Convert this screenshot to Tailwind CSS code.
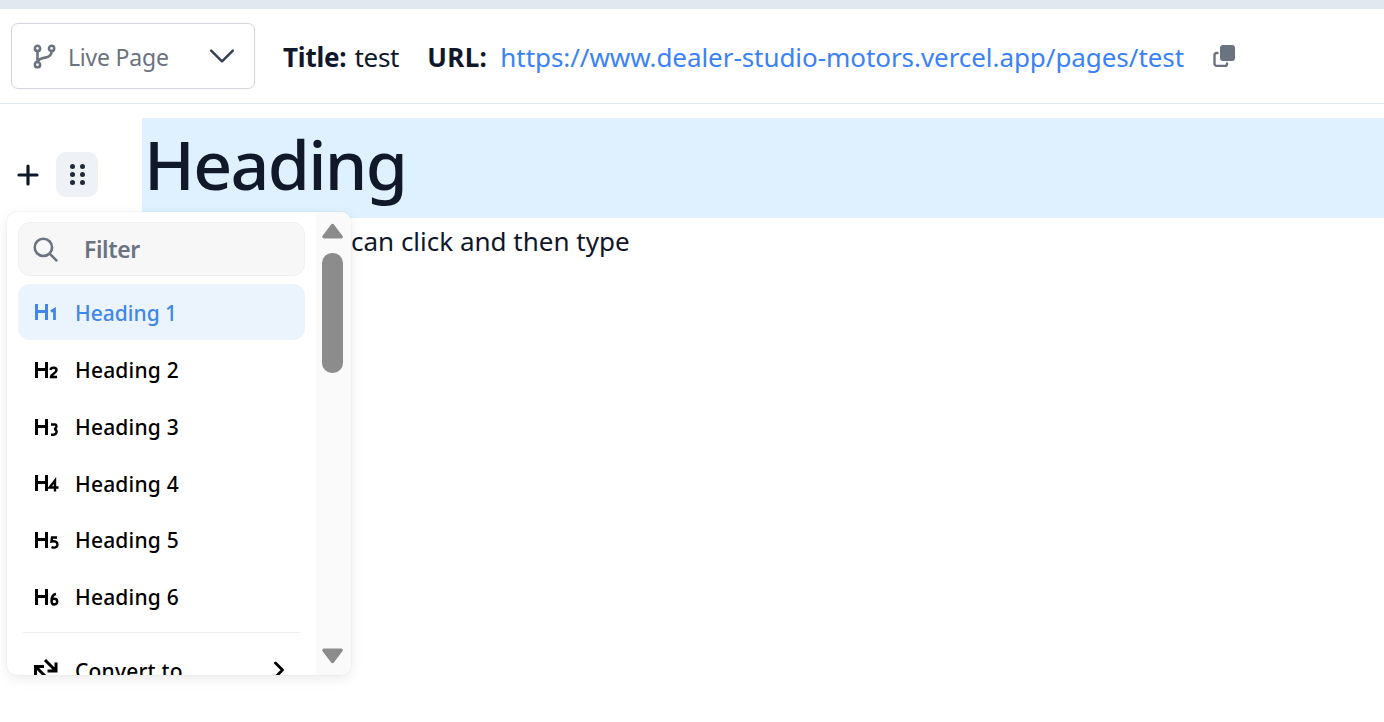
<!DOCTYPE html>
<html>
<head>
<meta charset="utf-8">
<script src="https://cdn.jsdelivr.net/npm/@tailwindcss/browser@4"></script>
</head>
<body class="bg-white font-['Noto_Sans','Open_Sans',sans-serif] text-[#0f172a]">
<div class="relative w-[1384px] h-[722px] overflow-hidden">
  <div class="h-[9px] bg-[#e2e8f0]"></div>
  <header class="h-[95px] border-b border-[#e2e8f0] flex items-center pl-[11px] pb-[1px]">
    <div class="w-[244px] h-[66px] border border-[#d1d5db] rounded-[7px] flex items-center pl-[19px] pr-[19px]">
      <svg class="w-[26px] h-[26px] text-[#6b7280]" viewBox="0 0 24 24" fill="none" stroke="currentColor" stroke-width="2.4" stroke-linecap="round"><circle cx="6" cy="5" r="2.4"/><circle cx="6" cy="20" r="2.4"/><circle cx="19" cy="5" r="2.4"/><path d="M6 7.5v10M19 7.5c0 4-3 5.500-6 6-3 .5-6 1-7 4"/></svg>
      <span class="ml-[11px] mt-[3px] text-[23px] text-[#6b7280] tracking-[-0.2px]">Live Page</span>
      <svg class="ml-auto w-[26px] h-[26px] text-[#374151]" viewBox="0 0 24 24" fill="none" stroke="currentColor" stroke-width="2.3" stroke-linecap="round" stroke-linejoin="round"><path d="M2 7l10 10L22 7"/></svg>
    </div>
    <div class="ml-[28px] text-[26px] flex items-center whitespace-nowrap">
      <b class="mt-[3px] font-bold tracking-[-0.2px]">Title:</b><span class="mt-[3px] ml-[8px] tracking-[-0.3px]">test</span>
      <b class="mt-[3px] ml-[28px] font-bold tracking-[0.4px]">URL:</b>
      <span class="mt-[3px] ml-[13px] text-[#3b82f6] tracking-[-0.06px]">https://www.dealer-studio-motors.vercel.app/pages/test</span>
      <svg class="ml-[29px] w-[22px] h-[22px] text-[#6b7280]" viewBox="0 0 22 22" fill="none"><rect x="7" y="0" width="15" height="16" rx="3" fill="currentColor"/><path d="M4.500 8H3.500A2 2 0 0 0 1.500 10v8.500a2.500 2.500 0 0 0 2.500 2.500h8a2 2 0 0 0 2-2v-.5" stroke="currentColor" stroke-width="2.400" stroke-linecap="round"/></svg>
    </div>
  </header>
  <main class="pt-[14px]">
    <div class="ml-[142px] h-[100px] bg-[#dff1ff] flex items-center pl-[2px] pb-[9px]">
      <h1 class="text-[68px] leading-none font-medium tracking-[-1.7px] text-[#111827]">Heading</h1>
    </div>
    <p class="pl-[351px] mt-[5px] text-[26px] leading-[36px]">can click and then type</p>
  </main>

  <div class="absolute left-[17px] top-[152px] flex items-center gap-[17px]">
    <svg class="w-[22px] h-[22px] text-[#0f172a]" viewBox="0 0 22 22" fill="none" stroke="currentColor" stroke-width="3.200" stroke-linecap="round"><path d="M11 2v18M2 11h18"/></svg>
    <div class="w-[42px] h-[45px] rounded-[10px] bg-[#eef2f6] grid grid-cols-[5px_5px] place-content-center gap-x-[5px] gap-y-[3px]">
      <i class="w-[5px] h-[5px] rounded-full bg-[#1f2937]"></i><i class="w-[5px] h-[5px] rounded-full bg-[#1f2937]"></i>
      <i class="w-[5px] h-[5px] rounded-full bg-[#1f2937]"></i><i class="w-[5px] h-[5px] rounded-full bg-[#1f2937]"></i>
      <i class="w-[5px] h-[5px] rounded-full bg-[#1f2937]"></i><i class="w-[5px] h-[5px] rounded-full bg-[#1f2937]"></i>
    </div>
  </div>

  <div class="absolute left-[7px] top-[212px] w-[344px] h-[463px] bg-white rounded-[10px] shadow-[0_4px_14px_rgba(0,0,0,0.08),0_0_2px_rgba(0,0,0,0.08)] overflow-hidden flex">
    <div class="w-[309px] pl-[11px] pr-[11px] pt-[10px]">
      <div class="h-[54px] bg-[#f7f7f7] border border-[#f0f0f0] rounded-[12px] flex items-center pl-[13px]">
        <svg class="w-[26px] h-[26px] text-[#6b7280]" viewBox="0 0 24 24" fill="none" stroke="currentColor" stroke-width="2.400" stroke-linecap="round"><circle cx="10.500" cy="10.500" r="8"/><path d="M16.500 16.500l6 6"/></svg>
        <span class="ml-[26px] text-[23px] font-semibold text-[#6b7280] tracking-[-0.4px]">Filter</span>
      </div>
      <div class="mt-[8px] h-[56px] rounded-[12px] bg-[#ebf3fc] flex items-center pl-[16px] text-[#3f87ea]">
        <svg class="w-[25px] h-[20px]" viewBox="0 0 25 20" fill="none" stroke="currentColor"><path d="M2.500 2v16M12.500 2v16M2.500 9.500h10" stroke-width="3"/><path d="M17 9.500l3.500-2V18" stroke-width="2.800"/></svg>
        <span class="ml-[16px] mt-[3px] text-[21px] font-medium">Heading 1</span>
      </div>
      <div class="flex flex-col mt-[1px]">
        <div class="h-[57px] flex items-center pl-[16px] text-black">
          <svg class="w-[25px] h-[20px]" viewBox="0 0 25 20" fill="none" stroke="currentColor"><path d="M2.500 2v16M12.500 2v16M2.500 9.500h10" stroke-width="3"/><path d="M16.500 10c.5-3 6-3 6 .2 0 3-5.500 3.500-5.500 6.800h6" stroke-width="2.500"/></svg>
          <span class="ml-[16px] mt-[3px] text-[21px] font-medium tracking-[0.2px]">Heading 2</span>
        </div>
        <div class="h-[57px] flex items-center pl-[16px] text-black">
          <svg class="w-[25px] h-[20px]" viewBox="0 0 25 20" fill="none" stroke="currentColor"><path d="M2.500 2v16M12.500 2v16M2.500 9.500h10" stroke-width="3"/><path d="M17 7.500h4c2 0 2 4-1 4.500 3.500 0 3.500 5.500-.5 5.700H17" stroke-width="2.400"/></svg>
          <span class="ml-[16px] mt-[3px] text-[21px] font-medium tracking-[0.2px]">Heading 3</span>
        </div>
        <div class="h-[56px] flex items-center pl-[16px] text-black">
          <svg class="w-[25px] h-[20px]" viewBox="0 0 25 20" fill="none" stroke="currentColor"><path d="M2.500 2v16M12.500 2v16M2.500 9.500h10" stroke-width="3"/><path d="M21 18.500V7.500l-5.500 7h9" stroke-width="2.400"/></svg>
          <span class="ml-[16px] mt-[3px] text-[21px] font-medium tracking-[0.2px]">Heading 4</span>
        </div>
        <div class="h-[57px] flex items-center pl-[16px] text-black">
          <svg class="w-[25px] h-[20px]" viewBox="0 0 25 20" fill="none" stroke="currentColor"><path d="M2.500 2v16M12.500 2v16M2.500 9.500h10" stroke-width="3"/><path d="M23 7.500h-5l-.5 4c3-.8 6 0 6 3 0 3-3.500 3.700-6 2.700" stroke-width="2.400"/></svg>
          <span class="ml-[16px] mt-[3px] text-[21px] font-medium tracking-[0.2px]">Heading 5</span>
        </div>
        <div class="h-[57px] flex items-center pl-[16px] text-black">
          <svg class="w-[25px] h-[20px]" viewBox="0 0 25 20" fill="none" stroke="currentColor"><path d="M2.500 2v16M12.500 2v16M2.500 9.500h10" stroke-width="3"/><path d="M22 7c-3 .5-4.500 3.500-4.500 7 0 2.200 1 3.500 2.800 3.500s2.900-1.200 2.900-2.900-1.200-2.800-2.900-2.800-2.800 1.200-2.800 2.500" stroke-width="2.400"/></svg>
          <span class="ml-[16px] mt-[3px] text-[21px] font-medium tracking-[0.2px]">Heading 6</span>
        </div>
      </div>
      <div class="mx-[5px] mt-[7px] h-px bg-[#eeeeee]"></div>
      <div class="h-[74px] flex items-center pl-[16px] pr-[20px] text-black">
        <svg class="w-[25px] h-[25px] mt-[3px]" viewBox="0 0 25 25" fill="none" stroke="currentColor" stroke-width="3"><path d="M11 1l11 11M22 3.500V12H13.500M1.500 17V7.500H10M1.500 7.500l10 10"/></svg>
        <span class="ml-[16px] mt-[3px] text-[21px] font-medium tracking-[0.2px]">Convert to</span>
        <svg class="ml-auto w-[12px] h-[18px]" viewBox="0 0 12 18" fill="none" stroke="currentColor" stroke-width="2.800" stroke-linecap="round" stroke-linejoin="round"><path d="M2.500 2l7 7-7 7"/></svg>
      </div>
    </div>
    <div class="w-[35px] bg-[#fafafa] flex flex-col pl-[6px] pt-[11px] pb-[11px]">
      <svg class="w-[21px] h-[16px] text-[#8c8c8c]" viewBox="0 0 21 16" fill="currentColor" stroke="currentColor" stroke-width="3.500" stroke-linejoin="round"><path d="M10.500 2.500L19 13.800H2z"/></svg>
      <div class="mt-[14px] w-[21px] h-[120px] rounded-[10px] bg-[#8c8c8c]"></div>
      <svg class="mt-auto w-[21px] h-[16px] text-[#8c8c8c]" viewBox="0 0 21 16" fill="currentColor" stroke="currentColor" stroke-width="3.500" stroke-linejoin="round"><path d="M10.500 13.500L19 2.200H2z"/></svg>
    </div>
  </div>
</div>
</body>
</html>
